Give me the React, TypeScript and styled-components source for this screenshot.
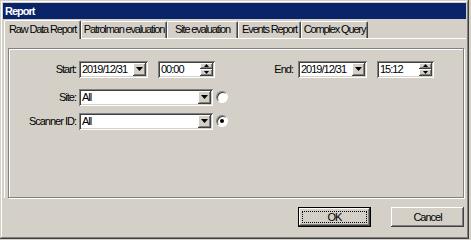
import styled, { createGlobalStyle } from "styled-components"

const face = "#d4d0c8"

const GlobalStyle = createGlobalStyle`
  html, body {
    margin: 0;
    padding: 0;
    background: ${face};
  }
  body {
    font-family: "Liberation Sans", Arial, sans-serif;
    font-size: 11px;
    letter-spacing: -1px;
    color: #000;
  }
`

const raised = `
  box-shadow: inset -1px -1px #404040, inset 1px 1px #fff,
    inset -2px -2px #808080, inset 2px 2px ${face};
`
const sunken = `
  box-shadow: inset 1px 1px #808080, inset -1px -1px #fff,
    inset 2px 2px #404040, inset -2px -2px ${face};
`

const tabs = [
  { text: "Raw Data Report", width: 77 },
  { text: "Patrolman evaluation", width: 86 },
  { text: "Site evaluation", width: 71 },
  { text: "Events Report", width: 63 },
  { text: "Complex Query", width: 67 },
]

const DownArrow = () => (
  <svg width="7" height="4" viewBox="0 0 7 4">
    <path d="M0 0h7L3.5 4z" fill="#000" />
  </svg>
)

const SpinArrow = ({ up }: { up?: boolean }) => (
  <svg width="5" height="3" viewBox="0 0 5 3">
    <path d={up ? "M0 3h5L2.5 0z" : "M0 0h5L2.5 3z"} fill="#000" />
  </svg>
)

const DateBox = ({ value }: { value: string }) => (
  <Field $width={69}>
    <FieldText>{value}</FieldText>
    <DropButton>
      <DownArrow />
    </DropButton>
  </Field>
)

const TimeBox = ({ value }: { value: string }) => (
  <Field $width={57}>
    <FieldText>{value}</FieldText>
    <Spinner>
      <SpinButton>
        <SpinArrow up />
      </SpinButton>
      <SpinButton>
        <SpinArrow />
      </SpinButton>
    </Spinner>
  </Field>
)

const Combo = ({ value }: { value: string }) => (
  <Field $width={134}>
    <FieldText>{value}</FieldText>
    <DropButton>
      <DownArrow />
    </DropButton>
  </Field>
)

export default function App() {
  return (
    <>
      <GlobalStyle />
      <Window>
        <TitleBar>Report</TitleBar>
        <Body>
          <TabStrip>
            {tabs.map((t, i) => (
              <Tab key={t.text} $active={i === 0} $width={t.width}>
                {t.text}
              </Tab>
            ))}
          </TabStrip>
          <TabPage>
            <Frame>
              <Row>
                <Label>Start:</Label>
                <DateBox value="2019/12/31" />
                <TimeBox value="00:00" />
                <EndGroup>
                  <EndLabel>End:</EndLabel>
                  <DateBox value="2019/12/31" />
                  <TimeBox value="15:12" />
                </EndGroup>
              </Row>
              <Row>
                <Label>Site:</Label>
                <Combo value="All" />
                <Radio $checked={false} />
              </Row>
              <Row>
                <Label>Scanner ID:</Label>
                <Combo value="All" />
                <Radio $checked />
              </Row>
            </Frame>
          </TabPage>
          <Footer>
            <Button $default>
              <Focus>OK</Focus>
            </Button>
            <Button>Cancel</Button>
          </Footer>
        </Body>
      </Window>
    </>
  )
}

const Window = styled.div`
  box-sizing: border-box;
  width: 469px;
  height: 239px;
  display: flex;
  flex-direction: column;
  padding: 3px;
  background: ${face};
  box-shadow: inset -1px -1px #404040, inset 1px 1px ${face},
    inset -2px -2px #808080, inset 2px 2px #fff;
`
const TitleBar = styled.div`
  height: 16px;
  line-height: 16px;
  padding-left: 2px;
  background: #0a246a;
  color: #fff;
  font-weight: bold;
`
const Body = styled.div`
  flex: 1;
  display: flex;
  flex-direction: column;
  padding: 1px 0 0 1px;
`
const TabStrip = styled.div`
  display: flex;
  align-items: flex-end;
  height: 18px;
`
const Tab = styled.div<{ $active?: boolean; $width: number }>`
  position: relative;
  box-sizing: border-box;
  width: ${(p) => p.$width}px;
  height: ${(p) => (p.$active ? 19 : 17)}px;
  margin-bottom: ${(p) => (p.$active ? -1 : 0)}px;
  line-height: ${(p) => (p.$active ? 16 : 15)}px;
  letter-spacing: -1.15px;
  text-align: center;
  background: ${face};
  border-top: 1px solid #fff;
  border-left: 1px solid #fff;
  border-right: 1px solid #404040;
  border-radius: 2px 2px 0 0;
  box-shadow: inset -1px 0 #808080;
  z-index: ${(p) => (p.$active ? 1 : 0)};
  white-space: nowrap;
`
const TabPage = styled.div`
  height: 160px;
  box-sizing: border-box;
  padding: 9px 2px 0 3px;
  border-top: 1px solid #fff;
  border-left: 1px solid #fff;
`
const Frame = styled.div`
  box-sizing: border-box;
  height: 150px;
  padding: 12px 0 0 0;
  border: 1px solid #808080;
  box-shadow: inset 1px 1px #fff, 1px 1px #fff;
  display: flex;
  flex-direction: column;
  gap: 8px;
  & > :first-child {
    margin-bottom: 4px;
  }
`
const Row = styled.div`
  display: flex;
  align-items: center;
  height: 16px;
  padding-right: 29px;
`
const Label = styled.div`
  width: 67px;
  text-align: right;
  padding-right: 3px;
  white-space: nowrap;
`
const EndGroup = styled.div`
  margin-left: auto;
  display: flex;
  align-items: center;
`
const EndLabel = styled.div`
  margin-right: 5px;
`
const Field = styled.div<{ $width: number }>`
  box-sizing: border-box;
  width: ${(p) => p.$width}px;
  height: 17px;
  padding: 2px;
  display: flex;
  align-items: stretch;
  background: #fff;
  ${sunken}
  & + & {
    margin-left: 10px;
  }
`
const FieldText = styled.div`
  flex: 1;
  padding-left: 1px;
  line-height: 13px;
`
const DropButton = styled.div`
  width: 13px;
  display: flex;
  align-items: center;
  justify-content: center;
  background: ${face};
  ${raised}
`
const Spinner = styled.div`
  width: 13px;
  display: flex;
  flex-direction: column;
`
const SpinButton = styled.div`
  flex: 1;
  display: flex;
  align-items: center;
  justify-content: center;
  background: ${face};
  ${raised}
`
const Radio = styled.div<{ $checked?: boolean }>`
  position: relative;
  box-sizing: border-box;
  width: 12px;
  height: 12px;
  margin-left: 3px;
  border-radius: 50%;
  background: #fff;
  border: 1px solid;
  border-color: #808080 #fff #fff #808080;
  box-shadow: inset 1px 1px #404040;
  &::after {
    content: "";
    display: ${(p) => (p.$checked ? "block" : "none")};
    position: absolute;
    left: 3px;
    top: 3px;
    width: 4px;
    height: 4px;
    border-radius: 50%;
    background: #000;
  }
`
const Footer = styled.div`
  flex: 1;
  display: flex;
  justify-content: flex-end;
  align-items: center;
  gap: 20px;
  padding-right: 2px;
`
const Button = styled.div<{ $default?: boolean }>`
  box-sizing: border-box;
  width: 73px;
  height: 20px;
  display: flex;
  align-items: center;
  justify-content: center;
  padding: 3px;
  background: ${face};
  ${(p) =>
    p.$default
      ? `border: 1px solid #000; box-shadow: inset -1px -1px #404040, inset 1px 1px #fff, inset -2px -2px #808080;`
      : raised}
`
const Focus = styled.div`
  flex: 1;
  align-self: stretch;
  display: flex;
  align-items: center;
  justify-content: center;
  outline: 1px dotted #000;
  outline-offset: -1px;
`
